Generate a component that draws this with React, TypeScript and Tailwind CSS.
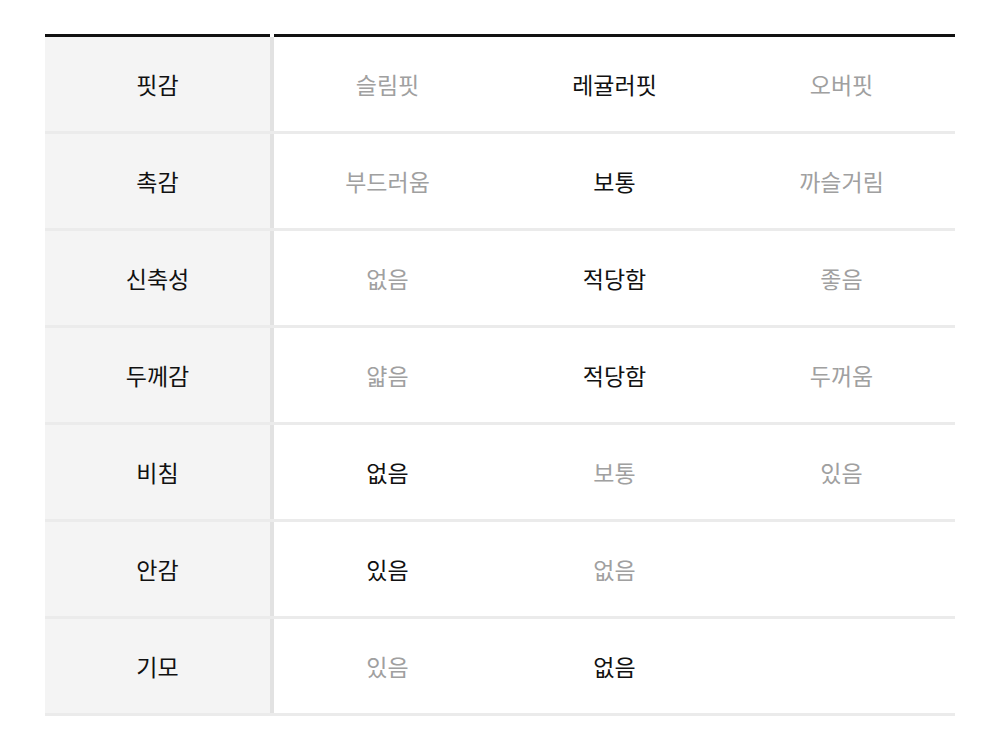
const rows: { label: string; values: { text: string; on: boolean }[] }[] = [
  {
    label: '핏감',
    values: [
      { text: '슬림핏', on: false },
      { text: '레귤러핏', on: true },
      { text: '오버핏', on: false },
    ],
  },
  {
    label: '촉감',
    values: [
      { text: '부드러움', on: false },
      { text: '보통', on: true },
      { text: '까슬거림', on: false },
    ],
  },
  {
    label: '신축성',
    values: [
      { text: '없음', on: false },
      { text: '적당함', on: true },
      { text: '좋음', on: false },
    ],
  },
  {
    label: '두께감',
    values: [
      { text: '얇음', on: false },
      { text: '적당함', on: true },
      { text: '두꺼움', on: false },
    ],
  },
  {
    label: '비침',
    values: [
      { text: '없음', on: true },
      { text: '보통', on: false },
      { text: '있음', on: false },
    ],
  },
  {
    label: '안감',
    values: [
      { text: '있음', on: true },
      { text: '없음', on: false },
      { text: '', on: false },
    ],
  },
  {
    label: '기모',
    values: [
      { text: '있음', on: false },
      { text: '없음', on: true },
      { text: '', on: false },
    ],
  },
]

export default function App() {
  return (
    <div
      className="w-[1000px] h-[753px] bg-white pt-[34px] px-[45px]"
      style={{ fontFamily: '"Noto Sans CJK KR", "Noto Sans", sans-serif' }}
    >
      {/* top rule, broken over the divider */}
      <div className="flex h-[3px]">
        <div className="w-[225px] bg-[#111]"></div>
        <div className="w-[4px]"></div>
        <div className="flex-1 bg-[#111]"></div>
      </div>

      {rows.map((row) => (
        <div key={row.label} className="flex h-[97px] border-b-[3px] border-[#ebebeb]">
          <div className="w-[225px] bg-[#f4f4f4] flex items-center justify-center text-[23px] text-[#111]">
            {row.label}
          </div>
          <div className="w-[4px] bg-[#e2e2e2]"></div>
          {row.values.map((v, i) => (
            <div
              key={i}
              className={
                'flex-1 flex items-center justify-center text-[23px] ' +
                (v.on ? 'text-[#111]' : 'text-[#a0a0a0]')
              }
            >
              {v.text}
            </div>
          ))}
        </div>
      ))}
    </div>
  )
}
